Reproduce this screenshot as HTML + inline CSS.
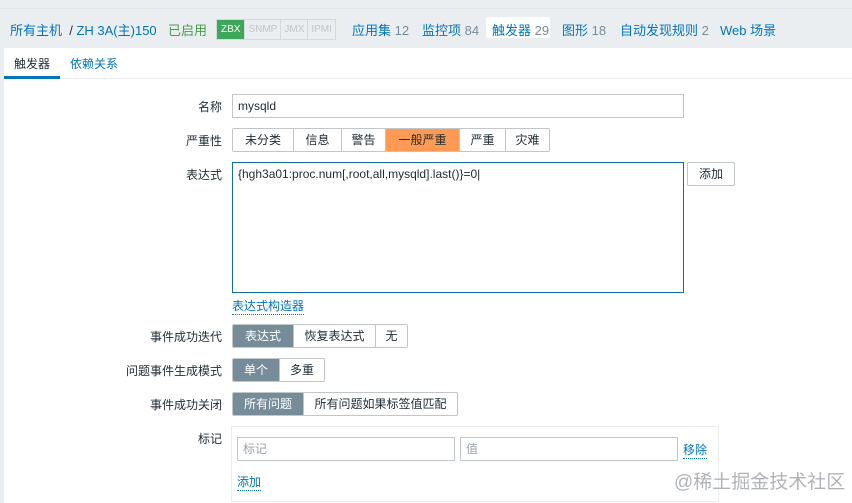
<!DOCTYPE html>
<html><head><meta charset="utf-8"><style>
*{box-sizing:border-box;margin:0;padding:0}
body{width:852px;height:503px;background:#ebeef0;font-family:"Liberation Sans","Noto Sans CJK SC",sans-serif;font-size:12px;color:#1f2c33;position:relative;overflow:hidden}
.a{position:absolute;white-space:nowrap}
.lnk{color:#0275b8}
.cnt{color:#768d99}
.panel{position:absolute;left:4px;top:48px;width:848px;height:455px;background:#fff}
.lbl{position:absolute;right:630px;text-align:right;color:#1f2c33}
.inp{position:absolute;border:1px solid #c1c6c8;background:#fff;height:24px;padding:3px 5px;line-height:16px}
.seg{position:absolute;display:flex;height:24px;border:1px solid #c1c6c8;border-radius:2px;overflow:hidden}
.seg div{border-left:1px solid #c1c6c8;text-align:center;line-height:22px;background:#fff}
.seg div:first-child{border-left:0}
.seg .on{background:#768d99;color:#fff}
.dot{border-bottom:1px dotted #0275b8}
</style></head><body>
<div class="a" style="left:0;top:8px;width:852px;border-top:1px solid #dfe4e7"></div>
<div class="a lnk" style="left:10px;top:20px;font-size:13px">所有主机 <span style="color:#1f2c33">&nbsp;/&nbsp;</span>ZH 3A(主)150</div>
<div class="a" style="left:168px;top:20px;font-size:13px;color:#429e47">已启用</div>
<div class="a" style="left:216px;top:19px;display:flex;font-size:10px;line-height:19px;border:1px solid #d5d9dc">
<span style="background:#3da85a;color:#fff;padding:0 4px">ZBX</span><span style="color:#c0c5c8;padding:0 3px;border-left:1px solid #d5d9dc">SNMP</span><span style="color:#c0c5c8;padding:0 3px;border-left:1px solid #d5d9dc">JMX</span><span style="color:#c0c5c8;padding:0 3px;border-left:1px solid #d5d9dc">IPMI</span></div>
<div class="a lnk" style="left:352px;top:20px;font-size:13px">应用集 <span class="cnt">12</span></div>
<div class="a lnk" style="left:422px;top:20px;font-size:13px">监控项 <span class="cnt">84</span></div>
<div class="a" style="left:486px;top:17px;width:64px;height:21px;background:#fff;border-radius:2px"></div>
<div class="a lnk" style="left:492px;top:20px;font-size:13px">触发器 <span class="cnt">29</span></div>
<div class="a lnk" style="left:562px;top:20px;font-size:13px">图形 <span class="cnt">18</span></div>
<div class="a lnk" style="left:620px;top:20px;font-size:13px">自动发现规则 <span class="cnt">2</span></div>
<div class="a lnk" style="left:720px;top:20px;font-size:13px">Web 场景</div>
<div class="panel"></div>
<div class="a" style="left:4px;top:78px;width:848px;border-top:1px solid #ebeef0"></div>
<div class="a" style="left:14px;top:55px;font-size:12px">触发器</div>
<div class="a" style="left:4px;top:76px;width:56px;height:3px;background:#0275b8"></div>
<div class="a lnk" style="left:70px;top:55px">依赖关系</div>

<div class="a lbl" style="top:98px">名称</div>
<div class="inp" style="left:232px;top:94px;width:452px">mysqld</div>
<div class="a lbl" style="top:132px">严重性</div>
<div class="seg" style="left:232px;top:128px">
<div style="width:60px">未分类</div><div style="width:48px">信息</div><div style="width:44px">警告</div><div style="width:74px;background:#fe9a54;border-color:#c1c6c8">一般严重</div><div style="width:46px">严重</div><div style="width:44px">灾难</div></div>
<div class="a lbl" style="top:166px">表达式</div>
<div class="inp" style="left:232px;top:162px;width:452px;height:131px;border-color:#0f71a6">{hgh3a01:proc.num[,root,all,mysqld].last()}=0|</div>
<div class="a" style="left:687px;top:162px;width:48px;height:24px;border:1px solid #c1c6c8;border-radius:2px;text-align:center;line-height:22px">添加</div>
<div class="a lnk dot" style="left:232px;top:297px">表达式构造器</div>
<div class="a lbl" style="top:328px">事件成功迭代</div>
<div class="seg" style="left:232px;top:324px"><div class="on" style="width:60px">表达式</div><div style="width:82px">恢复表达式</div><div style="width:32px">无</div></div>
<div class="a lbl" style="top:362px">问题事件生成模式</div>
<div class="seg" style="left:232px;top:358px"><div class="on" style="width:46px">单个</div><div style="width:45px">多重</div></div>
<div class="a lbl" style="top:396px">事件成功关闭</div>
<div class="seg" style="left:232px;top:392px"><div class="on" style="width:70px">所有问题</div><div style="width:154px">所有问题如果标签值匹配</div></div>
<div class="a lbl" style="top:430px">标记</div>
<div class="a" style="left:231px;top:426px;width:488px;height:76px;border:1px solid #ebeef0"></div>
<div class="inp" style="left:237px;top:437px;width:218px;color:#9aa5ab">标记</div>
<div class="inp" style="left:460px;top:437px;width:218px;color:#9aa5ab">值</div>
<div class="a lnk dot" style="left:683px;top:441px">移除</div>
<div class="a lnk dot" style="left:237px;top:473px">添加</div>
<div class="a" style="left:674px;top:467px;font-size:19px;color:rgba(150,155,160,.75)">@稀土掘金技术社区</div>
</body></html>
